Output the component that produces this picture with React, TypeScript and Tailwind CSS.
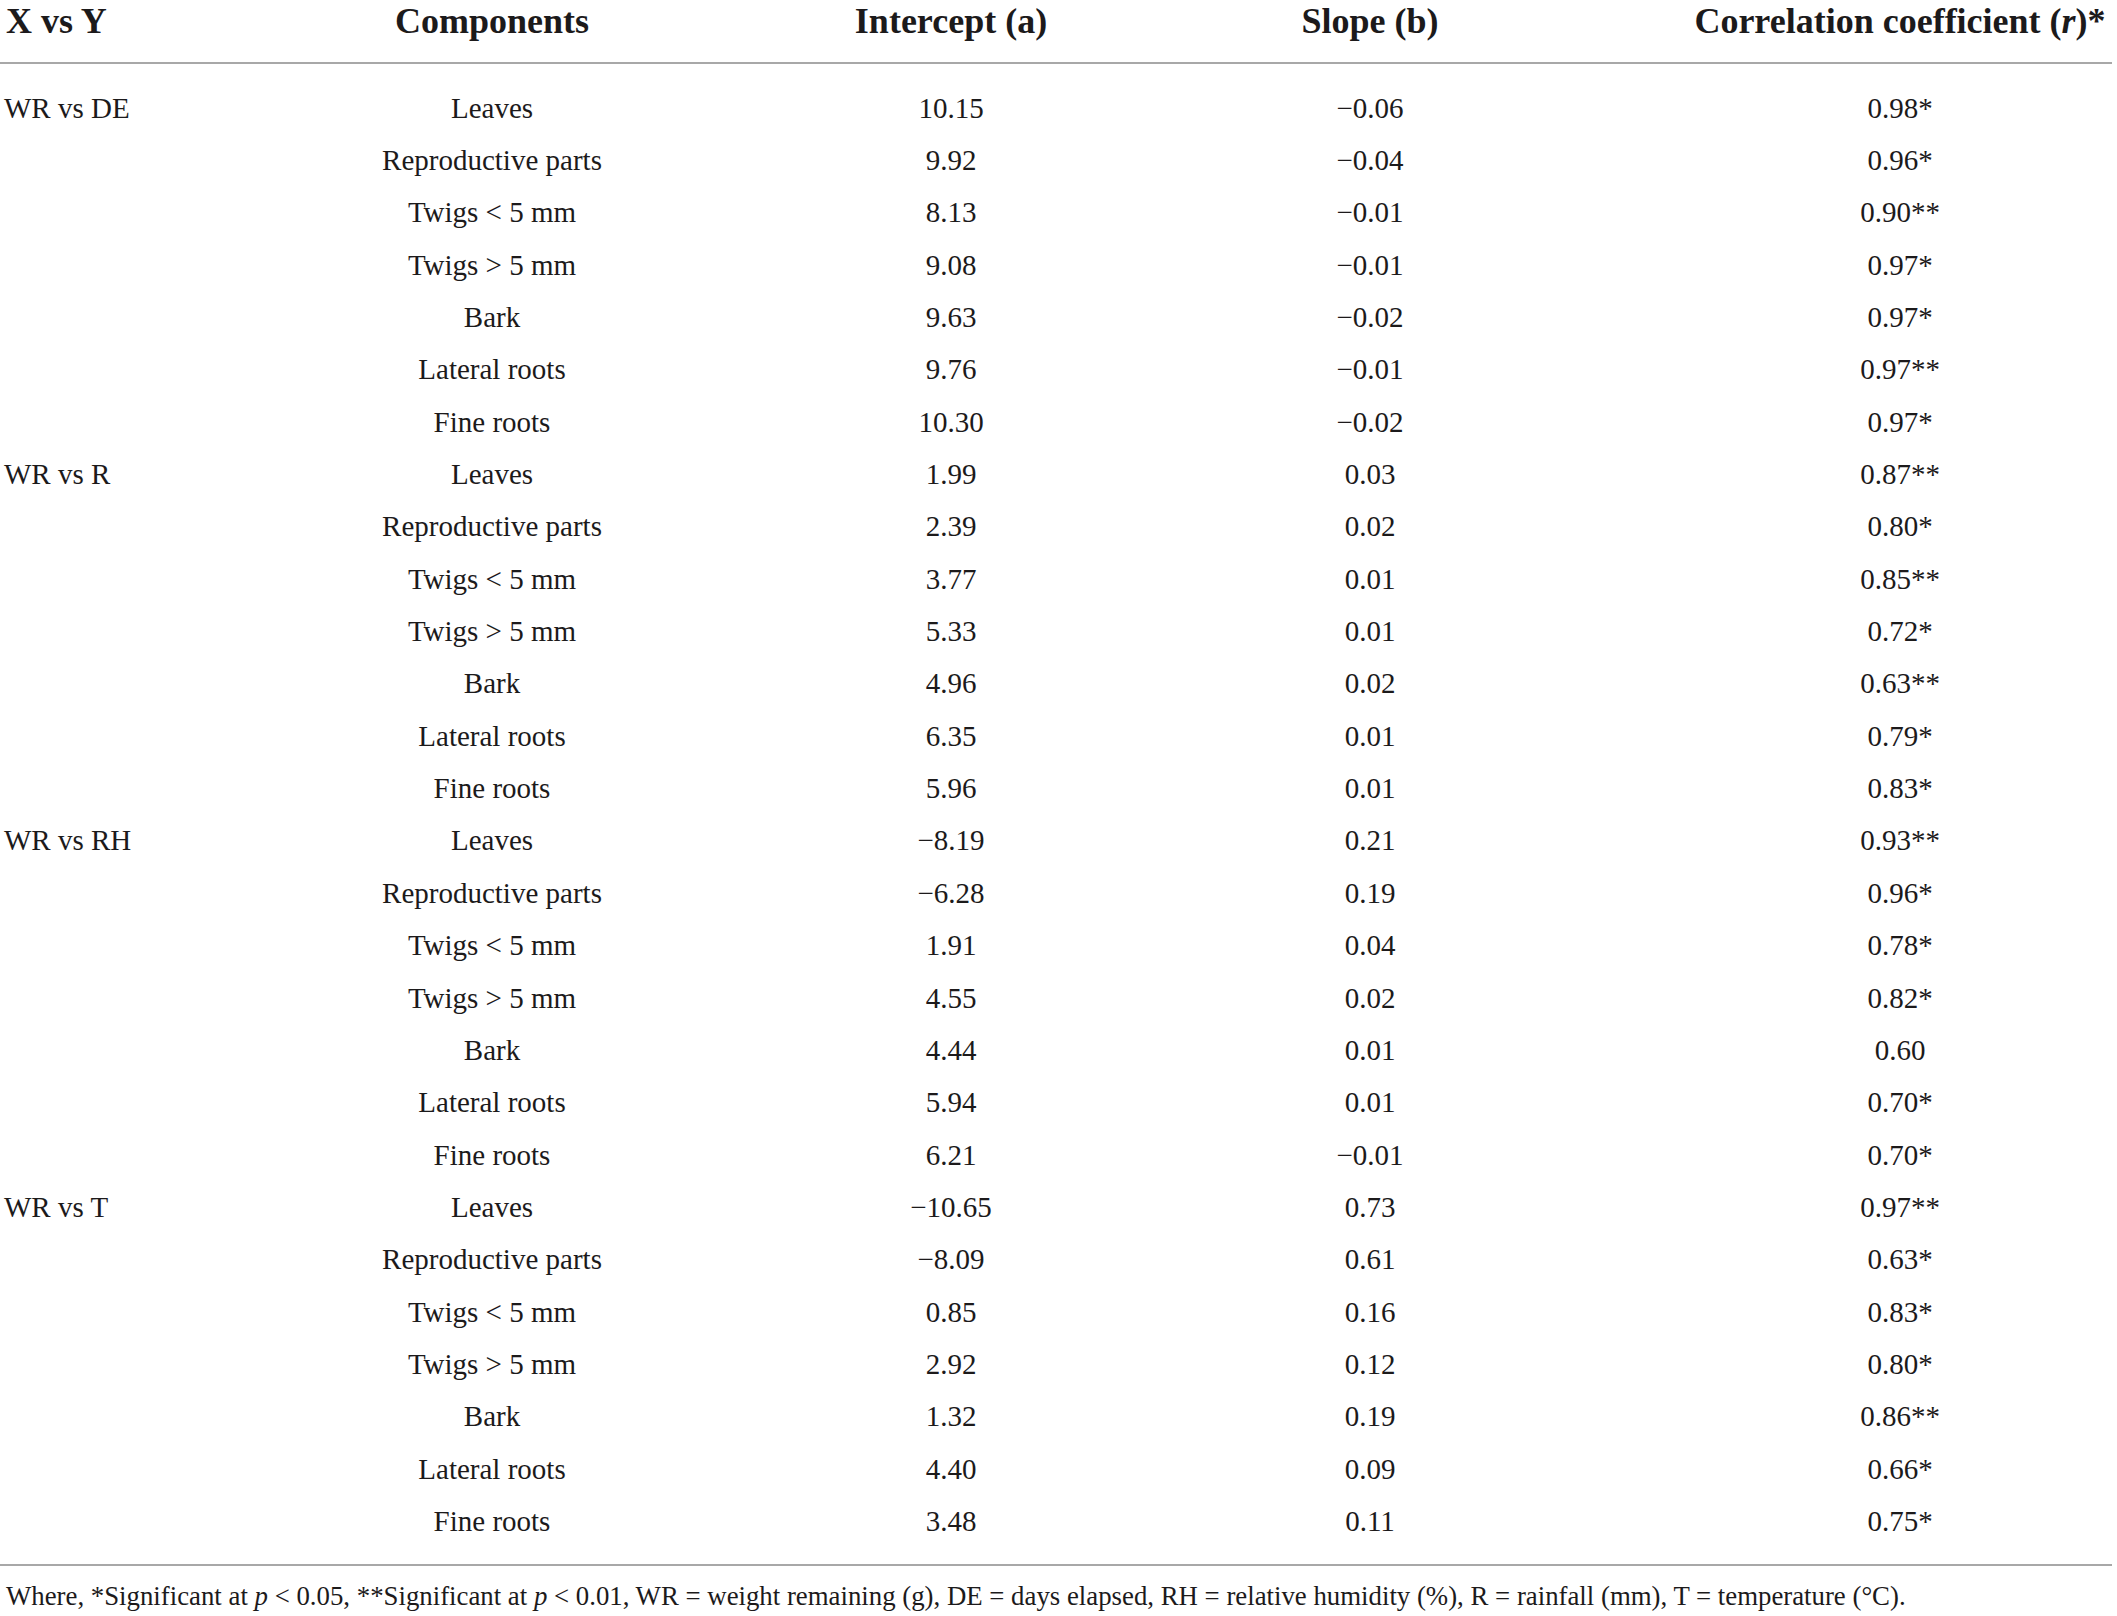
const rows: [string, string, string, string, string][] = [
  ['WR vs DE', 'Leaves', '10.15', '−0.06', '0.98*'],
  ['', 'Reproductive parts', '9.92', '−0.04', '0.96*'],
  ['', 'Twigs < 5 mm', '8.13', '−0.01', '0.90**'],
  ['', 'Twigs > 5 mm', '9.08', '−0.01', '0.97*'],
  ['', 'Bark', '9.63', '−0.02', '0.97*'],
  ['', 'Lateral roots', '9.76', '−0.01', '0.97**'],
  ['', 'Fine roots', '10.30', '−0.02', '0.97*'],
  ['WR vs R', 'Leaves', '1.99', '0.03', '0.87**'],
  ['', 'Reproductive parts', '2.39', '0.02', '0.80*'],
  ['', 'Twigs < 5 mm', '3.77', '0.01', '0.85**'],
  ['', 'Twigs > 5 mm', '5.33', '0.01', '0.72*'],
  ['', 'Bark', '4.96', '0.02', '0.63**'],
  ['', 'Lateral roots', '6.35', '0.01', '0.79*'],
  ['', 'Fine roots', '5.96', '0.01', '0.83*'],
  ['WR vs RH', 'Leaves', '−8.19', '0.21', '0.93**'],
  ['', 'Reproductive parts', '−6.28', '0.19', '0.96*'],
  ['', 'Twigs < 5 mm', '1.91', '0.04', '0.78*'],
  ['', 'Twigs > 5 mm', '4.55', '0.02', '0.82*'],
  ['', 'Bark', '4.44', '0.01', '0.60'],
  ['', 'Lateral roots', '5.94', '0.01', '0.70*'],
  ['', 'Fine roots', '6.21', '−0.01', '0.70*'],
  ['WR vs T', 'Leaves', '−10.65', '0.73', '0.97**'],
  ['', 'Reproductive parts', '−8.09', '0.61', '0.63*'],
  ['', 'Twigs < 5 mm', '0.85', '0.16', '0.83*'],
  ['', 'Twigs > 5 mm', '2.92', '0.12', '0.80*'],
  ['', 'Bark', '1.32', '0.19', '0.86**'],
  ['', 'Lateral roots', '4.40', '0.09', '0.66*'],
  ['', 'Fine roots', '3.48', '0.11', '0.75*'],
];

export default function App() {
  return (
    <div
      className="w-[2117px] h-[1616px] bg-white text-[#1c1a1b] overflow-hidden"
      style={{ fontFamily: '"Liberation Serif", serif' }}
    >
      <div className="w-[2112px]">
        {/* Header */}
        <div className="flex items-center h-[42px] pb-[20px] box-content text-[36px] font-bold leading-none border-b-2 border-[#a8a8a8] mb-[18px]">
          <div className="w-[133px] pl-[6px] whitespace-nowrap">X vs Y</div>
          <div className="w-[718px] text-center whitespace-nowrap">Components</div>
          <div className="w-[200px] text-center whitespace-nowrap">Intercept (a)</div>
          <div className="w-[638px] text-center whitespace-nowrap">Slope (b)</div>
          <div className="w-[422px] text-center whitespace-nowrap">
            Correlation coefficient (<i>r</i>)*
          </div>
        </div>

        {/* Body */}
        <div className="pb-[16px] border-b-2 border-[#a8a8a8]">
          {rows.map((r, i) => (
            <div key={i} className="flex items-center h-[52.35px] text-[29px] leading-none">
              <div className="w-[133px] pl-[4px] whitespace-nowrap">{r[0]}</div>
              <div className="w-[718px] text-center whitespace-nowrap">{r[1]}</div>
              <div className="w-[200px] text-center whitespace-nowrap">{r[2]}</div>
              <div className="w-[638px] text-center whitespace-nowrap">{r[3]}</div>
              <div className="w-[422px] text-center whitespace-nowrap">{r[4]}</div>
            </div>
          ))}
        </div>

        {/* Footnote */}
        <div className="pt-[17px] pl-[6px] text-[26.8px] leading-none whitespace-nowrap">
          Where, *Significant at <i>p</i> &lt; 0.05, **Significant at <i>p</i> &lt; 0.01, WR = weight
          remaining (g), DE = days elapsed, RH = relative humidity (%), R = rainfall (mm), T =
          temperature (°C).
        </div>
      </div>
    </div>
  );
}
